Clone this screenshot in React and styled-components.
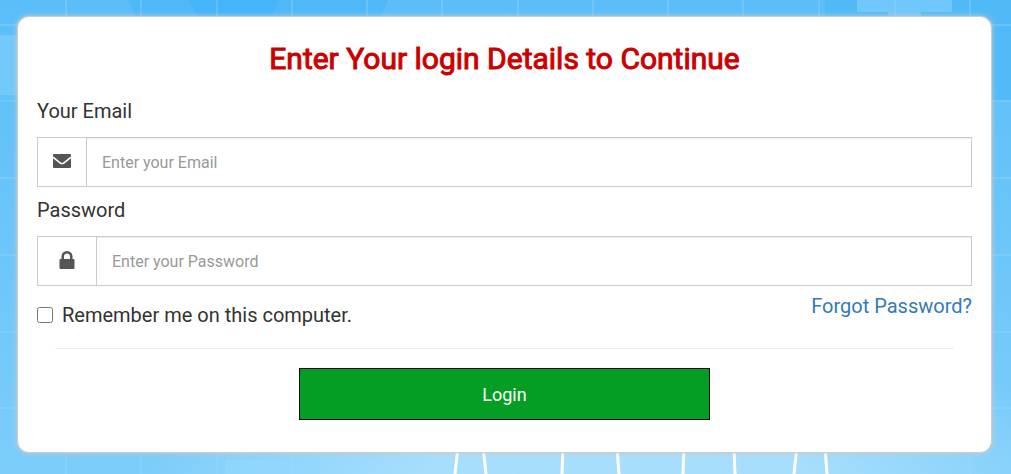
import React from "react";
import styled, { createGlobalStyle } from "styled-components";

const GlobalStyle = createGlobalStyle`
  * { box-sizing: border-box; }
  body {
    margin: 0;
    background: #62c0f9;
    color: #333;
    font-family: Roboto, "Liberation Sans", sans-serif;
    font-size: 20px;
    line-height: 28px;
  }
`;

const Page = styled.main`
  position: relative;
  min-height: 100vh;
  padding: 16px 19px 21px 17px;
  overflow: hidden;
`;

const Backdrop = styled.svg`
  position: absolute;
  inset: 0;
  width: 100%;
  height: 100%;
`;

const Card = styled.form`
  position: relative;
  padding: 24px 19px 32px;
  background: #fff;
  border: 1px solid #ccc;
  border-radius: 12px;
  box-shadow: 0 0 5px #ccc;
`;

const Title = styled.h1`
  margin: 0 0 20px;
  color: #c00;
  font-size: 30px;
  font-weight: 400;
  line-height: 36px;
  text-align: center;
  -webkit-text-stroke: 1px #c00;
`;

const Label = styled.label`
  display: block;
  margin-bottom: 12px;
  font-weight: 400;
`;

const InputGroup = styled.div`
  display: flex;
  height: 50px;
  margin-bottom: 9px;
  border: 1px solid #ccc;
`;

const Addon = styled.span`
  display: flex;
  flex: none;
  align-items: center;
  justify-content: center;
  width: ${({ $wide }) => ($wide ? 59 : 49)}px;
  padding-bottom: 2px;
  border-right: 1px solid #ccc;
  color: #555;
`;

const Input = styled.input`
  flex: 1;
  min-width: 0;
  padding: 0 15px;
  border: 0;
  background: #fff;
  box-shadow: inset 0 1px 1px rgba(0, 0, 0, 0.075);
  color: #555;
  font: 400 16px Roboto, "Liberation Sans", sans-serif;
  &::placeholder { color: #999; }
`;

const Options = styled.div`
  display: flex;
  justify-content: space-between;
  align-items: flex-start;
  margin-bottom: 19px;
`;

const Remember = styled.label`
  display: flex;
  align-items: center;
  gap: 9px;
  padding-top: 6px;
  font-weight: 400;
`;

const Checkbox = styled.input`
  width: 16px;
  height: 16px;
  margin: 0;
`;

const ForgotLink = styled.a`
  margin-top: -3px;
  color: #337ab7;
  font-weight: 400;
  text-decoration: none;
`;

const Divider = styled.hr`
  margin: 0 18px 19px;
  border: 0;
  border-top: 1px solid #eee;
`;

const LoginButton = styled.button`
  display: block;
  width: 44%;
  height: 52px;
  margin: 0 auto;
  border: 1px solid #000;
  background: #059e25;
  color: #fff;
  font: 400 18px Roboto, "Liberation Sans", sans-serif;
  cursor: pointer;
`;

const columns = [66, 141, 217, 292, 367, 442, 518, 593, 668, 743, 819, 895, 970];
const rows = [25, 101, 178, 255, 332, 408];
const strands = [
  "M458 447L455 474", "M483 447L486 474", "M563 447L562 474", "M617 447L619 474",
  "M684 447L683 474", "M734 447L735 474", "M797 447L794 474", "M825 447L827 474",
];

function Background() {
  return (
    <Backdrop viewBox="0 0 1011 474" preserveAspectRatio="none" aria-hidden="true">
      <defs>
        <linearGradient id="sky" x2="0" y2="1">
          <stop stopColor="#5bbef8" />
          <stop offset="1" stopColor="#7ccdfa" />
        </linearGradient>
        <radialGradient id="glow" cx="61%" cy="110%" r="48%">
          <stop stopColor="#a9dffc" />
          <stop offset=".45" stopColor="#a9dffc" stopOpacity=".95" />
          <stop offset="1" stopColor="#a9dffc" stopOpacity="0" />
        </radialGradient>
      </defs>
      <rect width="1011" height="474" fill="url(#sky)" />
      <path d="M128 0H388L376 30H142Z" fill="#4fb9f8" />
      <path d="M189 0H279Q275 10 267 20H201Q193 10 189 0Z" fill="#43b5f8" />
      <path d="M825 0H1011V100H825Z" fill="#4cb8f7" opacity=".7" />
      <path d="M857 0H952V12H921V20H888V12H857Z" fill="#6fc7fb" />
      <path d="M0 35H20V95H0Z" fill="#72c9fa" />
      <rect width="1011" height="474" fill="url(#glow)" />
      <path d="M225 460H320V474H225Z" fill="#92d7fd" opacity=".7" />
      <g stroke="#a5dcfc" strokeWidth="2" opacity=".28">
        {columns.map((x) => <path key={x} d={`M${x} 0V474`} />)}
        {rows.map((y) => <path key={y} d={`M0 ${y}H1011`} />)}
      </g>
      <g stroke="#fff" strokeWidth="3">
        {strands.map((d) => <path key={d} d={d} />)}
      </g>
    </Backdrop>
  );
}

function EnvelopeIcon() {
  return (
    <svg width="18" height="14" viewBox="0 0 18 14" aria-hidden="true">
      <rect width="18" height="14" rx="1" fill="currentColor" />
      <path d="M0 3.200L7 8.800Q9 10.400 11 8.800L18 3.200" fill="none" stroke="#fff" strokeWidth="1.500" />
    </svg>
  );
}

function LockIcon() {
  return (
    <svg width="16" height="18" viewBox="0 0 16 18" fill="currentColor" aria-hidden="true">
      <path fillRule="evenodd" d="M2.5 8V5.5a5.5 5.5 0 0 1 11 0V8H14.500Q15.500 8 15.500 9V17Q15.500 18 14.500 18H1.500Q.5 18 .5 17V9Q.5 8 1.500 8ZM5 8H11V5.500a3 3 0 0 0-6 0Z" />
    </svg>
  );
}

export default function App() {
  return (
    <>
      <GlobalStyle />
      <Page>
        <Background />
        <Card onSubmit={(event) => event.preventDefault()}>
          <Title>Enter Your login Details to Continue</Title>
          <Label htmlFor="email">Your Email</Label>
          <InputGroup>
            <Addon><EnvelopeIcon /></Addon>
            <Input id="email" type="email" placeholder="Enter your Email" />
          </InputGroup>
          <Label htmlFor="password">Password</Label>
          <InputGroup>
            <Addon $wide><LockIcon /></Addon>
            <Input id="password" type="password" placeholder="Enter your Password" />
          </InputGroup>
          <Options>
            <Remember htmlFor="remember">
              <Checkbox id="remember" type="checkbox" />
              Remember me on this computer.
            </Remember>
            <ForgotLink href="#forgot">Forgot Password?</ForgotLink>
          </Options>
          <Divider />
          <LoginButton type="submit">Login</LoginButton>
        </Card>
      </Page>
    </>
  );
}
